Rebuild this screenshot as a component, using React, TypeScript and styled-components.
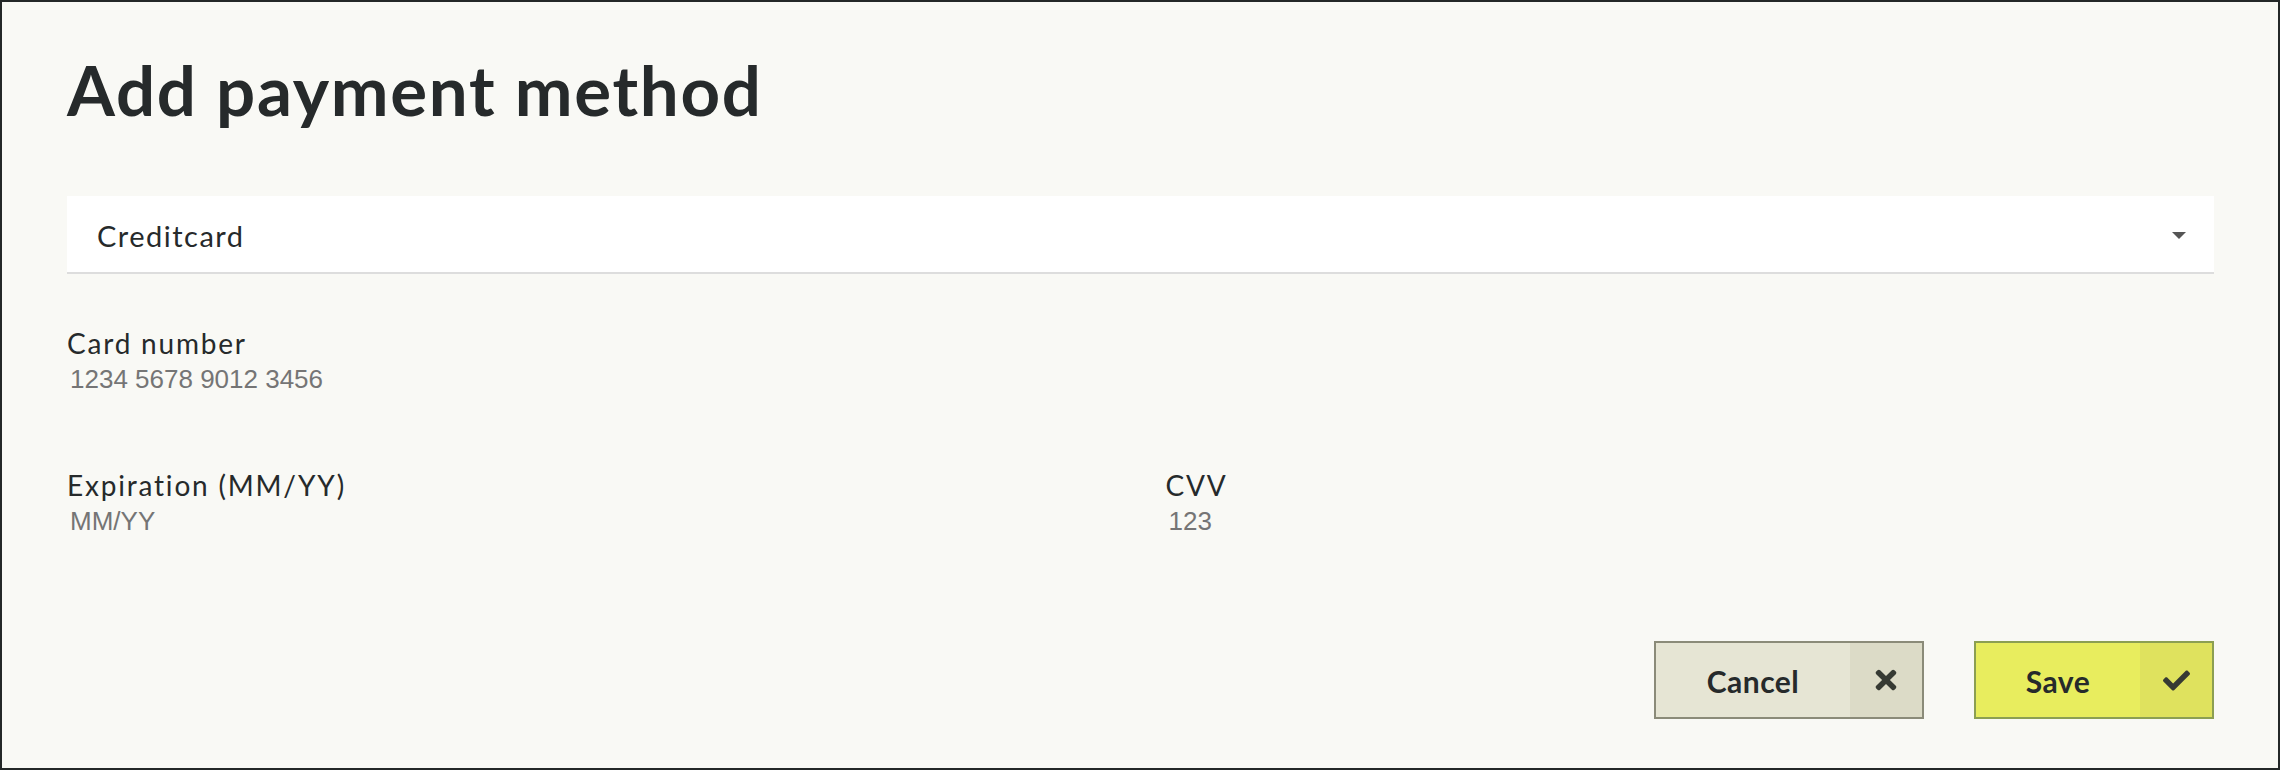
import * as React from "react";
import styled, { createGlobalStyle } from "styled-components";
import { FaTimes, FaCheck } from "react-icons/fa";

const GlobalStyle = createGlobalStyle`
  html, body {
    margin: 0;
    padding: 0;
    background: #f9f9f5;
  }
  * {
    box-sizing: border-box;
  }
`;

const Frame = styled.div`
  width: 2280px;
  height: 770px;
  border: 2px solid #242828;
  background: #f9f9f5;
  padding: 54px 64px 0 65px;
  font-family: Lato, "Noto Sans", sans-serif;
  color: #262a2b;
  display: flex;
  flex-direction: column;
`;

const Title = styled.h1`
  margin: 0;
  font-size: 69px;
  line-height: 68px;
  font-weight: 700;
  letter-spacing: 1.7px;
`;

const Select = styled.div`
  margin-top: 72px;
  height: 78px;
  background: #ffffff;
  border-bottom: 2px solid #dddddd;
  display: flex;
  align-items: center;
  justify-content: space-between;
  padding: 2px 28px 0 30px;
  font-size: 29px;
  letter-spacing: 1.5px;
  cursor: pointer;
`;

const Caret = styled.span`
  width: 0;
  height: 0;
  border-left: 7px solid transparent;
  border-right: 7px solid transparent;
  border-top: 7px solid #555555;
`;

const Field = styled.label<{ $top: number }>`
  display: flex;
  flex-direction: column;
  gap: 4px;
  margin-top: ${(p) => p.$top}px;
`;

const Row = styled.div`
  display: grid;
  grid-template-columns: 1fr 1fr;
  column-gap: 50px;
`;

const Label = styled.span`
  font-size: 28px;
  line-height: 34px;
  letter-spacing: 1.8px;
`;

const Input = styled.input`
  border: none;
  background: transparent;
  outline: none;
  padding: 0 3px;
  height: 30px;
  font-family: "Liberation Sans", Arial, sans-serif;
  font-size: 26px;
  line-height: 30px;
  color: #262a2b;

  &::placeholder {
    color: #757575;
  }
`;

const Actions = styled.div`
  margin-top: 105px;
  display: flex;
  justify-content: flex-end;
  gap: 50px;
`;

const Button = styled.button<{ $primary?: boolean }>`
  display: flex;
  height: 78px;
  padding: 0;
  border: 2px solid ${(p) => (p.$primary ? "#8c9f52" : "#8b8b79")};
  background: ${(p) => (p.$primary ? "#e8ed5e" : "#e6e5d4")};
  color: #262a2b;
  font-family: Lato, "Noto Sans", sans-serif;
  font-size: 30px;
  font-weight: 700;
  letter-spacing: 0.5px;
  cursor: pointer;
`;

const ButtonText = styled.span<{ $width: number }>`
  width: ${(p) => p.$width}px;
  display: flex;
  align-items: center;
  justify-content: center;
  padding-top: 2px;
`;

const ButtonIcon = styled.span<{ $primary?: boolean }>`
  width: 72px;
  display: flex;
  align-items: center;
  justify-content: center;
  background: ${(p) => (p.$primary ? "#dfe25e" : "#dcdbc7")};
  color: #363a33;
`;

export default function App() {
  return (
    <>
      <GlobalStyle />
      <Frame>
        <Title>Add payment method</Title>
        <Select>
          <span>Creditcard</span>
          <Caret />
        </Select>
        <Field $top={52}>
          <Label>Card number</Label>
          <Input placeholder="1234 5678 9012 3456" />
        </Field>
        <Row>
          <Field $top={74}>
            <Label>Expiration (MM/YY)</Label>
            <Input placeholder="MM/YY" />
          </Field>
          <Field $top={74}>
            <Label>CVV</Label>
            <Input placeholder="123" />
          </Field>
        </Row>
        <Actions>
          <Button type="button">
            <ButtonText $width={194}>Cancel</ButtonText>
            <ButtonIcon>
              <FaTimes size={30} />
            </ButtonIcon>
          </Button>
          <Button type="button" $primary>
            <ButtonText $width={164}>Save</ButtonText>
            <ButtonIcon $primary>
              <FaCheck size={27} />
            </ButtonIcon>
          </Button>
        </Actions>
      </Frame>
    </>
  );
}
